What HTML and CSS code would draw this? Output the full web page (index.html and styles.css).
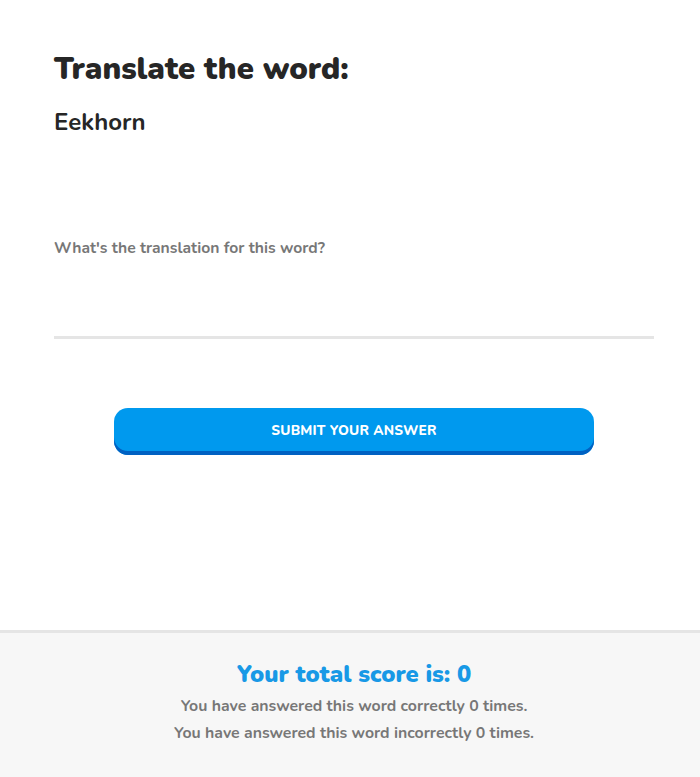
FILE: index.html
```html
<!DOCTYPE html>
<html lang="en">
<head>
<meta charset="utf-8">
<title>Translate the word</title>
<link rel="stylesheet" href="styles.css">
</head>
<body>
<main class="quiz">
  <h1 class="quiz-title">Translate the word:</h1>
  <h2 class="quiz-word">Eekhorn</h2>
  <form class="quiz-form">
    <label class="quiz-label" for="answer">What's the translation for this word?</label>
    <input class="quiz-input" id="answer" type="text">
    <div class="quiz-actions">
      <button class="quiz-button" type="button">SUBMIT YOUR ANSWER</button>
    </div>
  </form>
</main>
<footer class="score">
  <h3 class="score-title">Your total score is: 0</h3>
  <p class="score-line">You have answered this word correctly 0 times.</p>
  <p class="score-line">You have answered this word incorrectly 0 times.</p>
</footer>
</body>
</html>
```
FILE: styles.css
```css
html, body {
  margin: 0;
  padding: 0;
  background: #ffffff;
  font-family: "Nunito", "Lato", "Noto Sans", sans-serif;
  color: #262626;
}

.quiz {
  width: 600px;
  margin-left: 54px;
  height: 630px;
  box-sizing: border-box;
  padding-top: 50px;
}

.quiz-title {
  margin: 0;
  font-size: 31px;
  font-weight: 900;
  line-height: 38px;
  color: #262626;
}

.quiz-word {
  margin: 19px 0 0;
  font-size: 24px;
  font-weight: 700;
  line-height: 30px;
  color: #262626;
}

.quiz-form {
  display: flex;
  flex-direction: column;
  margin-top: 102px;
}

.quiz-label {
  font-size: 15.7px;
  font-weight: 700;
  color: #777777;
  line-height: 18px;
}

.quiz-input {
  margin-top: 10px;
  height: 69px;
  border: none;
  border-bottom: 3px solid #e5e5e5;
  outline: none;
  background: transparent;
  padding: 0;
  font-family: inherit;
  font-size: 18px;
}

.quiz-actions {
  display: flex;
  justify-content: center;
  margin-top: 69px;
}

.quiz-button {
  width: 480px;
  height: 47px;
  border: none;
  border-radius: 14px;
  background: #0099ee;
  box-shadow: inset 0 -4px 0 #0061c2;
  color: #ffffff;
  font-family: inherit;
  font-size: 13.7px;
  font-weight: 800;
  letter-spacing: 0.2px;
  padding: 0 0 3px;
  cursor: pointer;
}

.score {
  border-top: 3px solid #e5e5e5;
  background: #f7f7f7;
  height: 147px;
  padding-left: 8px;
  box-sizing: border-box;
  text-align: center;
  padding-top: 26px;
}

.score-title {
  margin: 0 0 4px;
  font-size: 23.7px;
  font-weight: 900;
  line-height: 30px;
  color: #1899e6;
}

.score-line {
  margin: 0;
  font-size: 15.85px;
  font-weight: 700;
  line-height: 27px;
  color: #777777;
}
```
